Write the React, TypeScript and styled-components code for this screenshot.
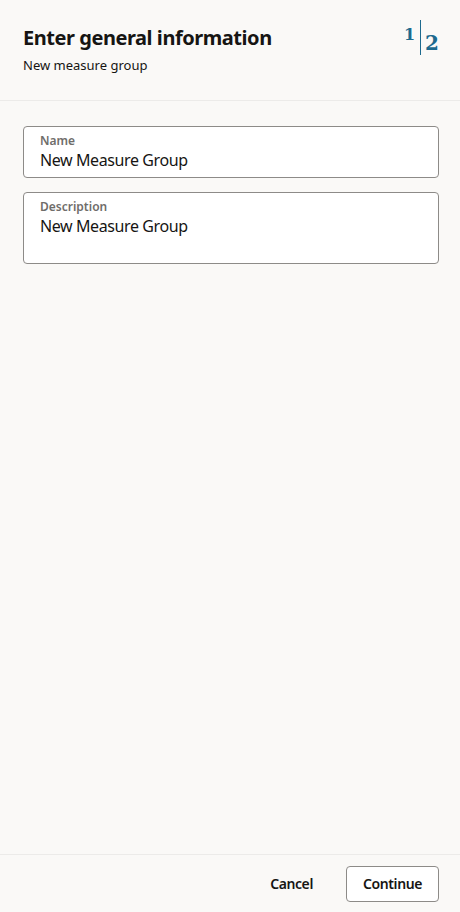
import React from "react";
import styled, { createGlobalStyle } from "styled-components";

const Global = createGlobalStyle`
  html, body { margin: 0; padding: 0; background: #faf9f7; }
  body { font-family: "Noto Sans", "Open Sans", sans-serif; color: #161513; }
  * { box-sizing: border-box; }
`;

const Page = styled.div`
  width: 460px;
  height: 912px;
  display: flex;
  flex-direction: column;
  background: #faf9f7;
`;

const Header = styled.header`
  height: 101px;
  flex: none;
  display: flex;
  justify-content: space-between;
  align-items: flex-start;
  padding: 24px 21px 0 23px;
  border-bottom: 1px solid #ecebe9;
`;

const TitleBlock = styled.div`
  display: flex;
  flex-direction: column;
`;

const Title = styled.h1`
  margin: 0;
  font-size: 20px;
  line-height: 28px;
  font-weight: 700;
  letter-spacing: -0.45px;
  color: #161513;
`;

const Subtitle = styled.div`
  margin-top: 4px;
  font-size: 13px;
  line-height: 18px;
  color: #161513;
`;

const Steps = styled.div`
  display: flex;
  align-items: stretch;
  margin-top: -4px;
  font-family: "DejaVu Serif", "Liberation Serif", serif;
  font-weight: 700;
  color: #1d6a8e;
`;

const StepCurrent = styled.span`
  font-size: 16px;
  line-height: 20px;
  padding: 5px 5px 0 0;
`;

const StepDivider = styled.span`
  width: 1px;
  height: 35px;
  background: #1d6a8e;
`;

const StepTotal = styled.span`
  font-size: 20px;
  line-height: 24px;
  padding: 11px 0 0 4px;
`;

const Content = styled.main`
  flex: 1;
  display: flex;
  flex-direction: column;
  gap: 14px;
  padding: 25px 21px 0 23px;
`;

const Field = styled.label<{ $tall?: boolean }>`
  display: flex;
  flex-direction: column;
  height: ${(p) => (p.$tall ? "72px" : "52px")};
  padding: 6px 16px 0;
  background: #fff;
  border: 1px solid #8d8b88;
  border-radius: 4px;
`;

const FieldLabel = styled.span`
  font-size: 12px;
  line-height: 16px;
  font-weight: 600;
  color: #6f6d6a;
`;

const FieldValue = styled.span`
  font-size: 16px;
  line-height: 22px;
  letter-spacing: -0.4px;
  color: #161513;
`;

const Footer = styled.footer`
  height: 58px;
  flex: none;
  display: flex;
  justify-content: flex-end;
  align-items: center;
  gap: 16px;
  padding: 0 21px 0 23px;
  border-top: 1px solid #ecebe9;
`;

const Button = styled.button<{ $outlined?: boolean }>`
  height: 36px;
  padding: 0 16px;
  font-family: "Noto Sans", "Open Sans", sans-serif;
  font-size: 14px;
  font-weight: 600;
  letter-spacing: -0.4px;
  color: #161513;
  background: ${(p) => (p.$outlined ? "#fff" : "transparent")};
  border: 1px solid ${(p) => (p.$outlined ? "#8d8b88" : "transparent")};
  border-radius: 4px;
  cursor: pointer;
`;

export default function App() {
  return (
    <Page>
      <Global />
      <Header>
        <TitleBlock>
          <Title>Enter general information</Title>
          <Subtitle>New measure group</Subtitle>
        </TitleBlock>
        <Steps>
          <StepCurrent>1</StepCurrent>
          <StepDivider />
          <StepTotal>2</StepTotal>
        </Steps>
      </Header>
      <Content>
        <Field>
          <FieldLabel>Name</FieldLabel>
          <FieldValue>New Measure Group</FieldValue>
        </Field>
        <Field $tall>
          <FieldLabel>Description</FieldLabel>
          <FieldValue>New Measure Group</FieldValue>
        </Field>
      </Content>
      <Footer>
        <Button>Cancel</Button>
        <Button $outlined>Continue</Button>
      </Footer>
    </Page>
  );
}
